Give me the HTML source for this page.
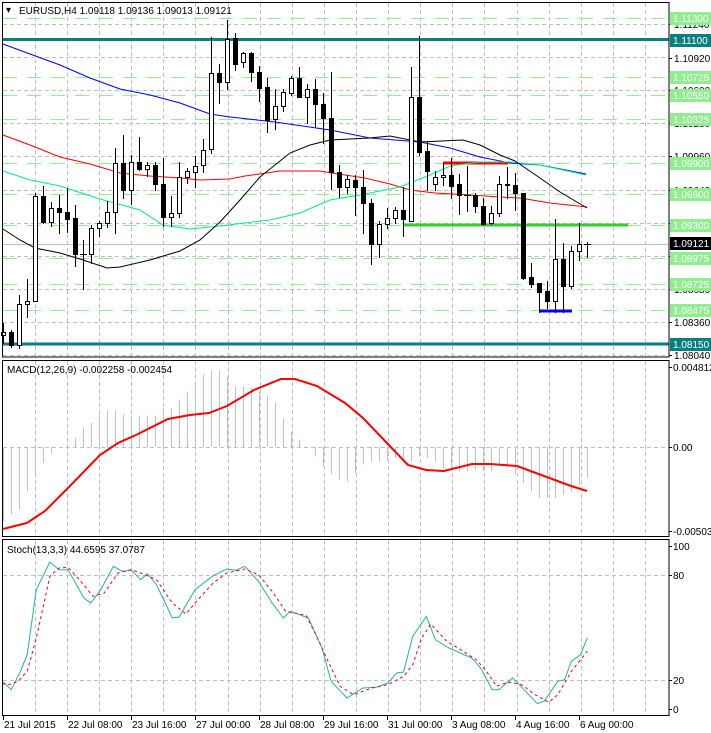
<!DOCTYPE html>
<html><head><meta charset="utf-8">
<style>
html,body{margin:0;padding:0;background:#fff;width:711px;height:733px;overflow:hidden}
svg{display:block}
text{font-family:"Liberation Sans",Arial,sans-serif;font-size:10px}
</style></head>
<body>
<svg id="s" width="711" height="733" xmlns="http://www.w3.org/2000/svg">
<rect width="711" height="733" fill="#fff"/>
<g id="grid"></g>
<g id="lv"></g>
<g id="ma"></g>
<g id="cd"></g>
<g id="ind"></g>
<g id="lab"></g>
<rect x="2.5" y="2.5" width="666.5" height="354.5" fill="none" stroke="#000"/>
<rect x="2.5" y="360.5" width="666.5" height="176" fill="none" stroke="#000"/>
<rect x="2.5" y="539.5" width="666.5" height="176" fill="none" stroke="#000"/>
<text x="6" y="13" font-size="11">▾</text>
<text x="19" y="14" font-size="11">EURUSD,H4  1.09118 1.09136 1.09013 1.09121</text>
<text x="7" y="373">MACD(12,26,9) -0.002258 -0.002454</text>
<text x="7" y="553">Stoch(13,3,3) 44.6595 37.0787</text>
<g id="dates"></g>
</svg>
<script>
var NS="http://www.w3.org/2000/svg";
function el(p,t,a,txt){var e=document.createElementNS(NS,t);for(var k in a)e.setAttribute(k,a[k]);if(txt!==undefined)e.textContent=txt;document.getElementById(p).appendChild(e);return e;}
function pl(p,pts,st,w,da){el(p,"polyline",{points:pts.map(function(q){return q.join(",")}).join(" "),fill:"none",stroke:st,"stroke-width":w,"stroke-dasharray":da||"none"});}
for(var gx=35;gx<668;gx+=32.1){var X=Math.round(gx)+0.5;
 [[3,357],[361,537],[540,715]].forEach(function(r){el("grid","line",{x1:X,x2:X,y1:r[0],y2:r[1],stroke:"#c0c0c0","stroke-dasharray":"4,3"});});}
for(var gy=24;gy<357;gy+=33.1){var Y=Math.round(gy)+0.5;el("grid","line",{x1:3,x2:668,y1:Y,y2:Y,stroke:"#c0c0c0","stroke-dasharray":"4,3"});}
[447,575,680].forEach(function(Y){el("grid","line",{x1:3,x2:668,y1:Y+0.5,y2:Y+0.5,stroke:"#c0c0c0","stroke-dasharray":"4,3"});});
var gl=[[18,"1.11300"],[77,"1.10725"],[95,"1.10550"],[119,"1.10325"],[163,"1.09900"],[194,"1.09600"],[225,"1.09300"],[258,"1.08975"],[284,"1.08725"],[310,"1.08475"]];
gl.forEach(function(g){el("lv","line",{x1:3,x2:668,y1:g[0]+0.5,y2:g[0]+0.5,stroke:"#90ee90","stroke-dasharray":"14,10"});});
el("lv","line",{x1:3,x2:668,y1:244.5,y2:244.5,stroke:"#c0c0c0"});
el("lv","line",{x1:3,x2:669,y1:39.5,y2:39.5,stroke:"#0a7f7f","stroke-width":3});
el("lv","line",{x1:3,x2:669,y1:344,y2:344,stroke:"#0a7f7f","stroke-width":3});
el("lv","line",{x1:403,x2:628,y1:225,y2:225,stroke:"#32cd32","stroke-width":3});
el("lv","line",{x1:443,x2:508,y1:163,y2:163,stroke:"#ff0000","stroke-width":3});
el("lv","line",{x1:539,x2:572,y1:311,y2:311,stroke:"#0000ff","stroke-width":3});
pl("ma",[[3,44],[30,54],[60,65],[90,78],[120,89],[150,95],[180,103],[210,114],[230,117],[275,122],[330,130],[370,138],[420,142],[450,148],[480,157],[510,163],[540,165],[586,174]],"#0000ff",1);
pl("ma",[[3,135],[30,145],[60,157],[90,164],[120,173],[150,176],[180,178],[200,180],[230,179],[245,176],[280,171],[320,171],[345,175],[365,178],[390,184],[410,190],[435,193],[470,195],[500,197],[520,198],[550,203],[587,207]],"#ff0000",1);
pl("ma",[[3,171],[30,180],[60,186],[100,199],[140,210],[163,225],[190,229],[220,226],[270,220],[300,213],[330,200],[360,195],[400,187],[430,175],[450,166],[480,162],[510,162],[540,165],[586,175]],"#00ee88",1);
pl("ma",[[3,229],[20,240],[35,248],[60,253],[80,259],[107,268],[120,267],[150,260],[180,251],[200,240],[220,222],[240,200],[260,177],[290,153],[310,145],[330,140],[370,138],[390,136],[420,142],[463,140],[480,145],[500,155],[515,161],[540,178],[560,192],[587,208]],"#000",1);
var C=[[332,335,323,343,1],[332,345,330,347,0],[304,345,295,348,1],[301,304,279,317,1],[196,301,193,301,1],[196,222,186,223,0],[208,222,202,226,1],[208,212,195,233,0],[212,219,188,232,0],[218,254,205,266,0],[254,254,240,289,0],[228,254,225,263,1],[223,228,221,236,1],[212,223,201,227,1],[163,212,148,233,1],[163,190,135,198,0],[162,190,155,204,1],[162,169,137,170,0],[165,169,162,176,1],[165,184,162,190,0],[184,217,158,226,0],[213,217,196,226,1],[177,213,162,217,1],[171,177,168,183,1],[166,172,156,187,1],[150,165,139,172,1],[73,149,37,153,1],[73,82,64,103,0],[39,82,20,89,1],
[38,64,33,70,0],[53,62,52,67,1],[53,72,52,81,0],[72,88,66,101,0],[87,120,78,132,0],[106,119,89,129,1],[92,106,89,111,1],[78,93,76,95,1],[78,97,67,97,0],[89,97,84,123,1],[89,104,79,127,0],[104,118,93,143,0],[118,172,72,189,0],[172,187,165,197,0],[179,187,175,193,1],[180,187,175,215,0],[187,203,170,233,0],[203,244,199,264,0],[224,244,221,257,1],[218,224,208,228,1],[210,218,207,223,1],[210,219,187,236,0],[97,221,67,221,1],[97,152,36,155,0],[151,171,142,190,0],[177,184,171,190,1],[175,177,163,185,1],
[175,186,158,198,0],[184,195,174,214,0],[195,195,166,211,0],[195,206,193,212,0],[206,224,198,225,0],[213,223,206,224,1],[184,213,176,216,1],[184,185,167,198,0],[185,193,173,210,0],[193,278,193,279,0],[277,284,263,287,0],[283,292,283,312,0],[291,301,281,308,0],[259,301,219,312,1],[259,286,243,312,0],[251,286,246,288,1],[244,251,223,260,1],[244,244,242,257,1]];
C.forEach(function(c,i){var x=3+8*i;
 el("cd","line",{x1:x+0.5,x2:x+0.5,y1:c[2],y2:c[3]+1,stroke:"#000"});
 var h=c[1]-c[0];
 if(h<1){el("cd","line",{x1:x-3,x2:x+4,y1:c[0]+0.5,y2:c[0]+0.5,stroke:"#000"});}
 else el("cd","rect",{x:x-1.5,y:c[0]+0.5,width:4,height:h,fill:c[4]?"#fff":"#000",stroke:"#000"});
});
var H=[490,470,455,400,352,315,287,270,262,238,208,195,170,157,157,170,172,172,172,172,150,150,125,100,70,50,38,38,55,85,85,90,100,115,135,183,222,245,268,295,325,350,365,370,345,320,310,310,307,300,310,310,295,300,310,330,335,340,340,335,340,340,320,330,350,375,400,420,420,420,410,400,380,360];
H.forEach(function(v,i){var x=3+8*i+0.5;el("ind","line",{x1:x,x2:x,y1:447,y2:358+v/3,stroke:"#c0c0c0"});});
pl("ind",[[3,529],[27,523],[45,511],[68,488],[100,455],[118,443],[136,435],[168,419],[190,415],[209,413],[227,406],[254,390],[281,379],[295,379],[317,386],[345,403],[363,418],[385,441],[408,465],[426,470],[444,471],[472,464],[490,464],[517,466],[544,476],[571,486],[587,491]],"#ff0000",2);
function cv(a){return a.map(function(q){return [(q[0]/2.205).toFixed(1),(538+q[1]/3).toFixed(1)]});}
pl("ind",cv([[5,430],[25,455],[45,400],[60,350],[80,155],[110,72],[130,95],[150,95],[185,180],[200,195],[220,160],[250,85],[270,100],[290,97],[310,125],[325,107],[345,140],[380,240],[395,237],[430,155],[470,113],[500,93],[520,97],[540,85],[570,130],[600,195],[625,240],[640,220],[680,240],[710,330],[730,430],[765,480],[800,450],[830,448],[855,435],[875,405],[890,402],[910,295],[940,235],[960,305],[990,330],[1040,360],[1060,390],[1085,455],[1100,455],[1130,420],[1145,440],[1185,497],[1200,490],[1230,430],[1245,425],[1260,370],[1280,350],[1295,300]]),"#20b2aa",1);
pl("ind",cv([[5,437],[20,440],[40,430],[60,400],[80,300],[110,115],[130,90],[150,88],[175,125],[205,175],[230,165],[260,105],[290,95],[320,110],[345,125],[380,195],[410,228],[440,180],[470,135],[500,105],[540,93],[570,110],[600,160],[630,220],[675,232],[700,300],[720,360],[750,445],[780,470],[820,450],[855,440],[890,415],[910,380],[930,300],[950,258],[985,310],[1010,330],[1050,365],[1070,395],[1095,445],[1120,432],[1150,440],[1180,470],[1210,493],[1230,470],[1260,400],[1295,340]]),"#ff0000",1,"3,3");
[[24,"1.11240"],[58,"1.10920"],[90,"1.10600"],[123,"1.10280"],[156,"1.09960"],[190,"1.09640"],[223,"1.09320"],[256,"1.09000"],[289,"1.08680"],[322,"1.08360"],[355,"1.08040"]].forEach(function(t){
 el("lab","line",{x1:669,x2:672,y1:t[0]+0.5,y2:t[0]+0.5,stroke:"#000"});el("lab","text",{x:674,y:t[0]+4},t[1]);});
function box(y,txt,bg){el("lab","rect",{x:670,y:y-6,width:41,height:13,fill:bg});el("lab","text",{x:673,y:y+4,fill:"#fff"},txt);}
gl.forEach(function(g){box(g[0],g[1],"#90ee90");});
box(40,"1.11100","#0a7f7f");box(344,"1.08150","#0a7f7f");box(243,"1.09121","#000");
[[367,"0.004812"],[447,"0.00"],[531,"-0.005032"],[546,"100"],[575,"80"],[680,"20"],[709,"0"]].forEach(function(t){
 el("lab","line",{x1:669,x2:672,y1:t[0]+0.5,y2:t[0]+0.5,stroke:"#000"});el("lab","text",{x:673,y:t[0]+4},t[1]);});
[[3,"21 Jul 2015"],[67,"22 Jul 08:00"],[131,"23 Jul 16:00"],[195,"27 Jul 00:00"],[259,"28 Jul 08:00"],[323,"29 Jul 16:00"],[387,"31 Jul 00:00"],[451,"3 Aug 08:00"],[515,"4 Aug 16:00"],[579,"6 Aug 00:00"]].forEach(function(d){
 el("dates","line",{x1:d[0]+0.5,x2:d[0]+0.5,y1:716,y2:720,stroke:"#000"});el("dates","text",{x:d[0]+1,y:728},d[1]);});
</script>
</body></html>
